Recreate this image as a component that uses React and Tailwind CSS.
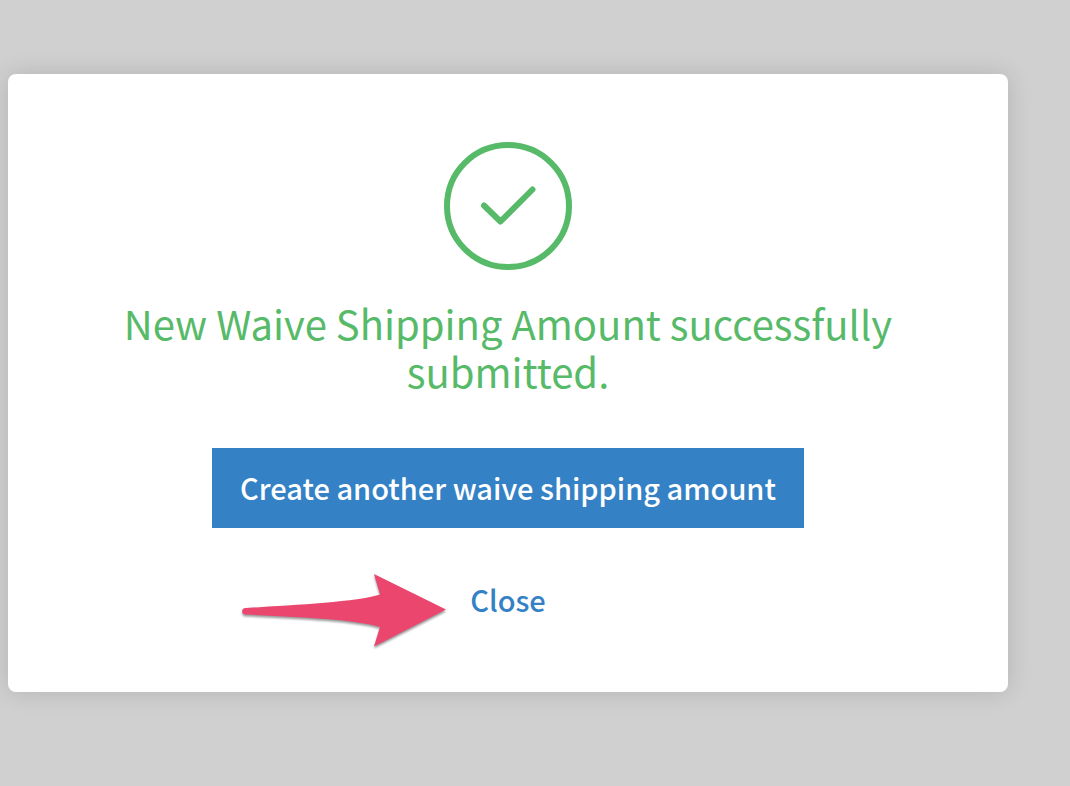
function SuccessIcon() {
  return (
    <svg className="size-32 shrink-0" viewBox="0 0 128 128" fill="none" stroke="#57ba69" aria-hidden="true">
      <circle cx="64" cy="64" r="61" strokeWidth="6" />
      <path d="M40 63.5 56.5 79.5 88.5 47.5" strokeWidth="6" strokeLinecap="round" strokeLinejoin="round" />
    </svg>
  );
}

function PointerArrow() {
  return (
    <svg
      className="pointer-events-none absolute right-full top-1/2 mr-6 h-20 w-52 -translate-y-[29px] overflow-visible"
      viewBox="0 0 208 80"
      aria-hidden="true"
    >
      <path
        d="M7.5 37C56 34 119 31 142 23.500L136 3 208 38.500 136 75.500 142 56C119 48.500 61 46 7.500 43.500C3 43.500 3 37 7.500 37Z"
        fill="#eb466e"
        className="drop-shadow-[0_2px_1px_rgba(0,0,0,0.4)]"
      />
    </svg>
  );
}

export default function App() {
  return (
    <main className="min-h-screen bg-[#d0d0d0] pt-[74px] pr-[62px] pb-[94px] pl-2 font-['Noto_Sans_CJK_SC',sans-serif]">
      <section
        role="dialog"
        aria-labelledby="dialog-title"
        className="flex flex-col items-center rounded-lg bg-white px-20 pt-[68px] pb-[52px] shadow-[0_0_24px_rgba(0,0,0,0.14)]"
      >
        <SuccessIcon />
        <h1 id="dialog-title" className="mt-[29px] text-center text-[40px] leading-[48px] text-[#57ba69]">
          New Waive Shipping Amount successfully submitted.
        </h1>
        <button type="button" className="mt-[53px] h-20 cursor-pointer bg-[#3581c5] px-7 text-[29px] font-medium text-white">
          Create another waive shipping amount
        </button>
        <div className="relative mt-8">
          <PointerArrow />
          <button type="button" className="block h-20 cursor-pointer text-[29px] font-medium text-[#3581c5]">
            Close
          </button>
        </div>
      </section>
    </main>
  );
}
